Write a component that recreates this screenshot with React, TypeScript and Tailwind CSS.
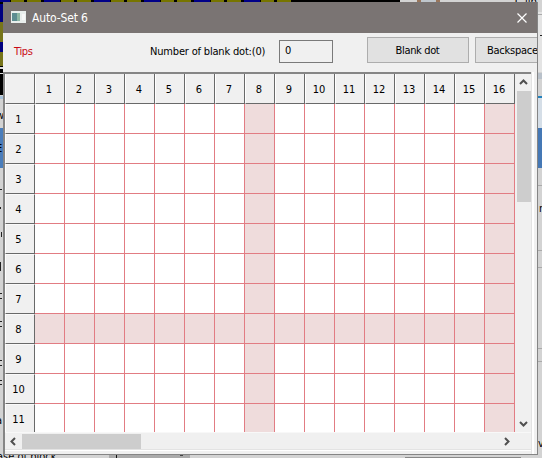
import React from "react";

const cols = Array.from({ length: 16 }, (_, i) => i + 1);
const rows = Array.from({ length: 11 }, (_, i) => i + 1);

function Chevron({ className }: { className: string }) {
  return (
    <svg width="9" height="9" viewBox="0 0 9 9" className={className}>
      <path d="M1 6L4.5 2.5L8 6" fill="none" stroke="#505050" strokeWidth="2" />
    </svg>
  );
}

function Desktop() {
  return (
    <div className="absolute inset-0 overflow-hidden bg-[#d3d3d3]">
      <svg width="542" height="458" className="block" shapeRendering="crispEdges">
        <rect width="400" height="95" fill="#000" />
        <g fill="#000088">
          {[0, 1, 2, 3, 4, 5].map((i) => (
            <rect key={i} x={i * 50 - 6} width="16" height="2" />
          ))}
        </g>
        <g fill="#777500">
          {[0, 1, 2, 3, 4, 5].map((i) => (
            <g key={i}>
              <rect x={i * 50 + 11} width="13" height="2" />
              <rect x={i * 50 + 27} width="14" height="2" />
            </g>
          ))}
        </g>
        <rect y="4" width="3" height="18" fill="#000080" />
        <rect y="22" width="3" height="20" fill="#77751a" />
        <rect y="42" width="3" height="10" fill="#000080" />
        <rect y="52" width="3" height="14" fill="#77751a" />
        <rect y="67" width="3" height="2" fill="#ddd" />
        <rect y="73" width="3" height="1" fill="#ddd" />
        <rect y="96" width="3" height="3" fill="#a7c2d9" />
        <rect y="128" width="3" height="40" fill="#4a7dbb" />
        <rect x="417" width="23" height="2" fill="#99765c" />
        <rect x="421" width="15" height="2" fill="#bfc6cc" />
        <rect x="538" y="12" width="4" height="60" fill="#e4e4e4" />
        <rect x="538" y="14" width="4" height="1" fill="#aaa" />
        <rect x="540" y="35" width="2" height="1" fill="#222" />
        <rect x="538" y="73" width="4" height="6" fill="#b9c1ca" />
        <rect x="538" y="96" width="4" height="2" fill="#2482bd" />
        <rect x="538" y="98" width="4" height="30" fill="#d5dee7" />
        <rect x="538" y="128" width="4" height="40" fill="#4578b5" />
        <g fill="#222">
          <rect y="189" width="2" height="1" />
          <rect y="207" width="1" height="2" />
          <rect x="1" y="232" width="1" height="5" />
          <rect y="262" width="1" height="9" />
          <rect y="293" width="2" height="1" />
          <rect y="298" width="2" height="1" />
          <rect y="321" width="2" height="1" />
          <rect y="326" width="2" height="1" />
          <rect y="360" width="2" height="1" />
          <rect y="365" width="2" height="1" />
          <rect y="380" width="2" height="1" />
          <rect y="384" width="2" height="1" />
        </g>
        <g fill="#aaa">
          <rect x="538" y="185" width="4" height="1" />
          <rect x="538" y="250" width="4" height="1" />
          <rect x="538" y="267" width="4" height="1" />
          <rect x="538" y="348" width="4" height="1" />
          <rect x="538" y="361" width="4" height="1" />
        </g>
        <rect x="109" y="455" width="81" height="3" fill="#aaa" />
        <rect x="116" y="455" width="1" height="3" fill="#111" />
        <rect x="180" y="455" width="3" height="1" fill="#444" />
        <rect x="405" y="457" width="116" height="1" fill="#888" />
      </svg>
      <span className="absolute left-[-3px] top-[450px] text-[11px] leading-[13px]">ase of block</span>
      <span className="absolute left-[515px] top-[-5px] whitespace-nowrap text-[11px] leading-[13px]">C lib</span>
      <span className="absolute left-[539px] top-[202px] text-[11px] leading-[13px]">r</span>
      <span className="absolute left-[538px] top-[437px] text-[11px] leading-[13px]">v</span>
      <span className="absolute left-[-4px] top-[109px] text-[11px] leading-[13px]">w</span>
      <span className="absolute left-[-4px] top-[142px] text-[11px] leading-[13px]">E</span>
      <span className="absolute left-[-4px] top-[414px] text-[11px] leading-[13px]">a</span>
    </div>
  );
}

export default function App() {
  return (
    <div className="relative h-[458px] w-[542px] overflow-hidden font-['DejaVu_Sans_Condensed','DejaVu_Sans',sans-serif] [font-stretch:condensed] text-black">
      <Desktop />
      <main className="absolute left-[3px] top-[2px] flex h-[453px] w-[535px] flex-col overflow-hidden border-b border-r border-[#858585] bg-[#f0f0f0]">
        <header className="flex h-[31px] w-[535px] shrink-0 items-center bg-[#7a7473] pl-2 text-white">
          <svg width="15" height="12" viewBox="0 0 15 12" className="-mt-px shrink-0">
            <path d="M0 0H15V12H0Z" fill="#e9eeec" />
            <path d="M1 2H9V10H1Z" fill="#5d8d91" />
            <path d="M6 2H9V10H6Z" fill="#8eb7a4" />
            <path d="M11 3H14V9H11Z" fill="#f8f8f8" />
          </svg>
          <span className="ml-[6px] w-[485px] text-[12px] leading-4 tracking-[-0.15px]">Auto-Set 6</span>
          <svg width="10" height="10" viewBox="0 0 10 10" className="shrink-0">
            <path d="M.5 .5L9.5 9.5M9.5 .5L.5 9.5" stroke="#fff" strokeWidth="1.2" />
          </svg>
        </header>

        <div className="flex h-[39px] w-[620px] shrink-0 items-start text-[11px] leading-[13px]">
          <span className="ml-[11px] mt-[12px] w-[136px] tracking-[-0.3px] text-[#c90812]">Tips</span>
          <span className="mt-[12px] w-[129px] whitespace-nowrap tracking-[-0.18px]">Number of blank dot:(0)</span>
          <div className="mt-[7px] h-[23px] w-[54px] border border-[#7a7a7a] pl-[5px] pt-[3px]">0</div>
          <button className="ml-[34px] mt-1 h-[26px] w-[102px] border border-[#adadad] bg-[#e1e1e1] pr-[1px] pt-px tracking-[-0.35px]">Blank dot</button>
          <button className="ml-[6px] mt-1 h-[26px] w-[102px] border border-[#adadad] bg-[#e1e1e1] pl-[11px] pt-px text-left tracking-[-0.25px]">Backspace</button>
        </div>

        <div className="flex min-h-0 w-[534px] flex-1">
          <div className="flex w-[529px] shrink-0 flex-col border-l-2 border-t-2 border-[#858585]">
            <div className="flex h-[358px]">
              <div className="h-[358px] w-[510px] shrink-0 overflow-hidden text-[11px] leading-[13px]">
                <div className="flex h-[30px]">
                  <div className="w-[30px] shrink-0 border-b border-l border-r border-b-[#696969] border-l-white border-r-[#696969]" />
                  {cols.map((c) => (
                    <div key={c} className="flex w-[30px] shrink-0 items-center justify-center border-b border-l border-r border-b-[#696969] border-l-white border-r-[#696969] pr-[2px] pt-[2px]">
                      {c}
                    </div>
                  ))}
                </div>
                {rows.map((r) => (
                  <div key={r} className="flex h-[30px]">
                    <div className="flex w-[30px] shrink-0 items-center justify-center border-b border-l border-r border-t border-b-[#696969] border-l-white border-r-[#696969] border-t-[#fafafa] pr-[3px] pt-px">
                      {r}
                    </div>
                    {cols.map((c) => (
                      <div key={c} className={`w-[30px] shrink-0 border-b border-r border-[#e27c83] ${r === 8 || c % 8 === 0 ? "bg-[#efdcdc]" : "bg-white"}`} />
                    ))}
                  </div>
                ))}
              </div>
              <div className="flex w-[17px] flex-col items-center bg-[#f0f0f0]">
                <div className="flex h-[17px] items-center"><Chevron className="" /></div>
                <div className="ml-px h-[111px] w-[15px] bg-[#cdcdcd]" />
                <div className="flex flex-1 items-end pb-[4px]"><Chevron className="rotate-180" /></div>
              </div>
            </div>
            <div className="flex h-[17px] items-center border-t border-[#f8f8f8] bg-[#f0f0f0]">
              <div className="flex w-[17px] justify-center"><Chevron className="-rotate-90" /></div>
              <div className="h-[15px] w-[119px] bg-[#cdcdcd]" />
              <div className="flex w-[371px] justify-end pr-px"><Chevron className="rotate-90" /></div>
            </div>
            <div className="h-px bg-[#e3e3e3]" />
            <div className="h-px bg-white" />
          </div>
          <div className="ml-[-1px] w-px bg-[#e3e3e3]" />
          <div className="w-[2px] bg-white" />
        </div>
      </main>
    </div>
  );
}
